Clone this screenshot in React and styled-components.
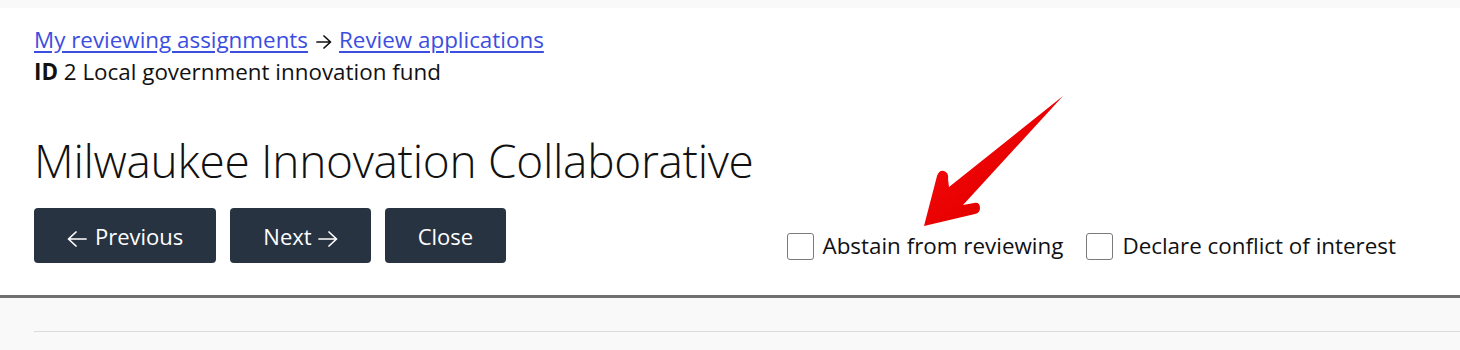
import React from 'react'
import styled, { createGlobalStyle } from 'styled-components'

const GlobalStyle = createGlobalStyle`
	html, body {
		margin: 0;
		padding: 0;
		background: #f9f9f9;
		font-family: 'Open Sans', 'Noto Sans', sans-serif;
		color: #111;
	}
`

const Page = styled.div`
	position: relative;
	width: 1460px;
	height: 350px;
	overflow: hidden;
	padding-top: 8px;
	box-sizing: border-box;
`

const Header = styled.header`
	background: #fff;
	border-bottom: 3px solid #707070;
	padding: 17px 64px 32px 34px;
`

const Crumbs = styled.div`
	font-size: 22.4px;
	line-height: 30px;
	a {
		color: #3c4ee0;
		text-decoration: underline;
		text-underline-offset: 3px;
	}
`

const ArrowSvg = styled.svg`
	display: inline-block;
	vertical-align: ${p => p.$lift || '-1px'};
	margin: ${p => p.$gap || '0'};
`

// w x h arrow drawn as a line with an open head
const Arrow = ({ left, gap, w = 16, h = 14, lift }) => {
	const m = h / 2
	const d = left
		? `M${w - 1} ${m}H1.5M${m + 1} 1 1.5 ${m}l${m - 0.5} ${m - 1}`
		: `M1 ${m}H${w - 1.5}M${w - m - 1} 1l${m - 0.5} ${m - 1}-${m - 0.5} ${m - 1}`
	return (
		<ArrowSvg
			width={w}
			height={h}
			viewBox={`0 0 ${w} ${h}`}
			$gap={gap}
			$lift={lift}
			fill="none"
			stroke="currentColor"
			strokeWidth="1.7"
			strokeLinecap="round"
			strokeLinejoin="round"
		>
			<path d={d} />
		</ArrowSvg>
	)
}

const Meta = styled.div`
	font-size: 22.4px;
	line-height: 34px;
	b {
		font-weight: 700;
	}
`

const Title = styled.h1`
	margin: 41px 0 0;
	font-size: 46px;
	font-weight: 300;
	line-height: 60px;
	letter-spacing: -0.3px;
`

const Row = styled.div`
	display: flex;
	align-items: flex-end;
	justify-content: space-between;
	margin-top: 18px;
`

const Buttons = styled.div`
	display: flex;
	gap: 14px;
`

const Button = styled.button`
	height: 55px;
	padding: 0 33px;
	border: 0;
	border-radius: 4px;
	background: #283342;
	color: #fff;
	font-family: inherit;
	font-size: 22px;
	cursor: pointer;
`

const Checks = styled.div`
	display: flex;
	gap: 23px;
	margin-bottom: 3px;
`

const Check = styled.label`
	display: flex;
	align-items: center;
	gap: 9px;
	font-size: 22.4px;
	line-height: 28px;
	cursor: pointer;
`

const Box = styled.input.attrs({ type: 'checkbox' })`
	appearance: none;
	margin: 0;
	width: 27px;
	height: 27px;
	border: 1px solid #7a7a7a;
	border-radius: 3px;
	background: #fff;
`

const Body = styled.main`
	padding: 33px 0 0 34px;
`

const Rule = styled.hr`
	margin: 0;
	border: 0;
	border-top: 1px solid #dcdcdc;
`

const Pointer = styled.svg`
	position: absolute;
	left: 920px;
	top: 92px;
	pointer-events: none;
`

export default function App() {
	return (
		<Page>
			<GlobalStyle />
			<Header>
				<Crumbs>
					<a href="#">My reviewing assignments</a>
					<Arrow gap="0 7px 0 8px" />
					<a href="#">Review applications</a>
				</Crumbs>
				<Meta>
					<b>ID</b> 2 Local government innovation fund
				</Meta>
				<Title>Milwaukee Innovation Collaborative</Title>
				<Row>
					<Buttons>
						<Button>
							<Arrow left w={20} h={16} lift="-2px" gap="0 8px 0 0" />Previous
						</Button>
						<Button>
							Next<Arrow w={20} h={16} lift="-2px" gap="0 0 0 6px" />
						</Button>
						<Button>Close</Button>
					</Buttons>
					<Checks>
						<Check>
							<Box />
							Abstain from reviewing
						</Check>
						<Check>
							<Box />
							Declare conflict of interest
						</Check>
					</Checks>
				</Row>
			</Header>
			<Body>
				<Rule />
			</Body>
			<Pointer width="150" height="140" viewBox="0 0 150 140">
				<defs>
					<linearGradient id="redGrad" x1="0" y1="0" x2="1" y2="1">
						<stop offset="0" stopColor="#ff1010" />
						<stop offset="0.6" stopColor="#e60000" />
						<stop offset="1" stopColor="#c80000" />
					</linearGradient>
				</defs>
				<path
					d="M143,4 L43,113 L54,111 Q60,110 60,116 Q60,121 55,122 L4,134 L17,84 Q19,78 24,79 Q29,81 28,87 L29,95 Z"
					fill="url(#redGrad)"
				/>
			</Pointer>
		</Page>
	)
}
